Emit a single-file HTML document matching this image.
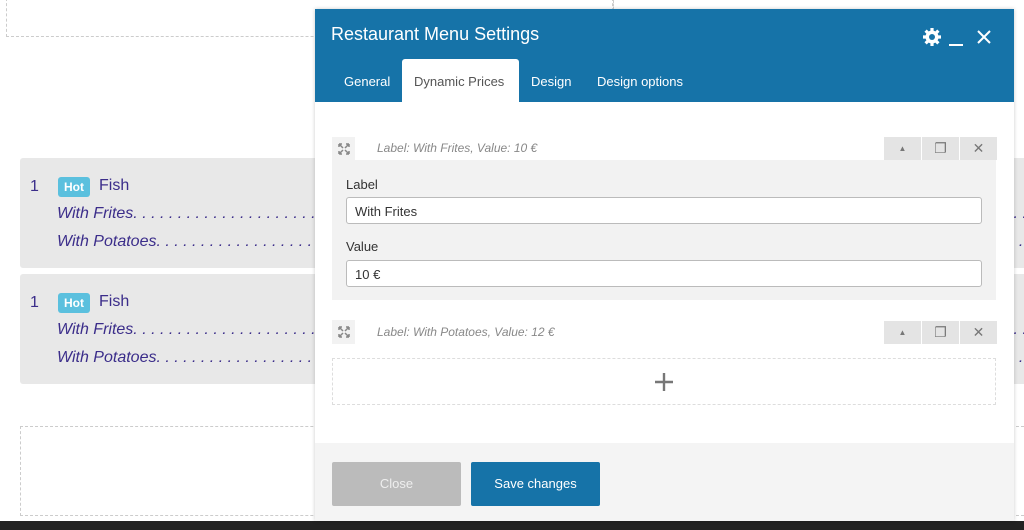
<!DOCTYPE html>
<html><head><style>
*{box-sizing:border-box;margin:0;padding:0}
html,body{width:1024px;height:530px;overflow:hidden}
body{background:#fff;font-family:"Liberation Sans",sans-serif;position:relative}
.abs{position:absolute}
.menu{position:absolute;left:20px;width:1004px;background:#e8e8e8;border-radius:3px 0 0 3px;color:#3b2d8a;overflow:hidden}
.menu .num{position:absolute;left:10px;top:20px;font-size:16px}
.hot{position:absolute;left:38px;top:19px;background:#5bc0de;color:#fff;font-weight:bold;font-size:12px;padding:3px 6px;border-radius:3px}
.fish{position:absolute;left:79px;top:19px;font-size:16px}
.it{position:absolute;left:37px;font-style:italic;font-size:16px;white-space:nowrap}
.modal{position:absolute;left:315px;top:9px;width:699px;height:512px;background:#fff;box-shadow:0 0 4px rgba(0,0,0,.2)}
.hd{height:93px;background:#1673a8;color:#fff;position:relative}
.tab{position:absolute;top:74px;font-size:13px;color:#fff}
.ph{position:absolute;height:23px;font-style:italic;font-size:12px;color:#888}
.btnx{position:absolute;width:37px;height:23px;background:#e4e4e4;color:#777;text-align:center;line-height:23px;font-size:14px}
.inp{position:absolute;left:346px;width:636px;height:27px;border:1px solid #bbb;border-radius:3px;background:#fff;font-size:13px;padding:6px 8px;color:#333}
.lbl{position:absolute;left:346px;font-size:13px;color:#333}
</style></head><body>
<div class="abs" style="left:6px;top:-2px;width:607px;height:39px;border:1px dashed #ccc"></div>
<div class="abs" style="left:613px;top:0;height:10px;border-left:1px dashed #ccc"></div>
<div class="abs" style="left:20px;top:426px;width:1004px;height:90px;border:1px dashed #ccc;border-right:none"></div>
<div class="menu" style="top:158px;height:110px"><span class="num">1</span><span class="hot">Hot</span><span class="fish">Fish</span>
<span class="it" style="top:47px">With Frites. . . . . . . . . . . . . . . . . . . . . . . . . . . . . . . . . . . . . . . . . . . . . . . . . . . . . . . . . . . . . . . . . . . . . . . . . . . . . . . . . . . . . . . . . . . . . . . . . . . . . . . . . . . . . . . . . . . . . . . . . . . .</span>
<span class="it" style="top:75px">With Potatoes. . . . . . . . . . . . . . . . . . . . . . . . . . . . . . . . . . . . . . . . . . . . . . . . . . . . . . . . . . . . . . . . . . . . . . . . . . . . . . . . . . . . . . . . . . . . . . . . . . . . . . . . . . . . . . . . . . . . . . . . . . . .</span></div>
<div class="menu" style="top:274px;height:110px"><span class="num">1</span><span class="hot">Hot</span><span class="fish">Fish</span>
<span class="it" style="top:47px">With Frites. . . . . . . . . . . . . . . . . . . . . . . . . . . . . . . . . . . . . . . . . . . . . . . . . . . . . . . . . . . . . . . . . . . . . . . . . . . . . . . . . . . . . . . . . . . . . . . . . . . . . . . . . . . . . . . . . . . . . . . . . . . .</span>
<span class="it" style="top:75px">With Potatoes. . . . . . . . . . . . . . . . . . . . . . . . . . . . . . . . . . . . . . . . . . . . . . . . . . . . . . . . . . . . . . . . . . . . . . . . . . . . . . . . . . . . . . . . . . . . . . . . . . . . . . . . . . . . . . . . . . . . . . . . . . . .</span></div>
<div class="abs" style="left:0;top:521px;width:1024px;height:9px;background:#222"></div>
<div class="modal">
 <div class="hd">
  <div class="abs" style="left:16px;top:15px;font-size:18px">Restaurant Menu Settings</div>
  <svg class="abs" style="left:607px;top:18px" width="20" height="20" viewBox="0 0 20 20"><circle cx="10" cy="10" r="6.5" fill="#fff"/><g stroke="#fff" stroke-width="3.2"><line x1="10" y1="1" x2="10" y2="19"/><line x1="1" y1="10" x2="19" y2="10"/><line x1="3.6" y1="3.6" x2="16.4" y2="16.4"/><line x1="16.4" y1="3.6" x2="3.6" y2="16.4"/></g><circle cx="10" cy="10" r="3" fill="#1673a8"/></svg>
  <div class="abs" style="left:634px;top:35px;width:14px;height:2px;background:#fff"></div>
  <svg class="abs" style="left:662px;top:21px" width="14" height="14"><path d="M1 1L13 13M13 1L1 13" stroke="#fff" stroke-width="2"/></svg>
  <div class="abs" style="left:87px;top:50px;width:117px;height:43px;background:#fff;border-radius:3px 3px 0 0"></div>
  <span class="tab" style="left:29px;top:65px">General</span>
  <span class="tab" style="left:99px;top:65px;color:#555">Dynamic Prices</span>
  <span class="tab" style="left:216px;top:65px">Design</span>
  <span class="tab" style="left:282px;top:65px">Design options</span>
 </div>
 <div class="abs" style="left:0;top:434px;width:699px;height:78px;background:#f4f4f4"></div>
 <div class="abs" style="left:17px;top:453px;width:129px;height:44px;background:#bbb;border-radius:2px;color:#eee;font-size:13px;text-align:center;line-height:44px">Close</div>
 <div class="abs" style="left:156px;top:453px;width:129px;height:44px;background:#1673a8;border-radius:2px;color:#fff;font-size:13px;text-align:center;line-height:44px">Save changes</div>
</div>
<div class="abs" style="left:332px;top:160px;width:664px;height:140px;background:#f2f2f2"></div>
<div class="abs" style="left:332px;top:137px;width:23px;height:23px;background:#f2f2f2"></div>
<svg class="abs" style="left:338px;top:143px" width="12" height="12"><path d="M1 1l4 4M11 1l-4 4M1 11l4-4M11 11l-4-4M1 1h3M1 1v3M11 1h-3M11 1v3M1 11h3M1 11v-3M11 11h-3M11 11v-3" stroke="#888" stroke-width="1.5"/></svg>
<div class="ph" style="left:377px;top:141px">Label: With Frites, Value: 10 €</div>
<div class="btnx" style="left:884px;top:137px;font-size:8px">▲</div>
<div class="btnx" style="left:922px;top:137px">❐</div>
<div class="btnx" style="left:960px;top:137px">✕</div>
<div class="lbl" style="top:177px">Label</div>
<div class="inp" style="top:197px">With Frites</div>
<div class="lbl" style="top:239px">Value</div>
<div class="inp" style="top:260px">10 €</div>
<div class="abs" style="left:332px;top:320px;width:23px;height:24px;background:#f2f2f2"></div>
<svg class="abs" style="left:338px;top:326px" width="12" height="12"><path d="M1 1l4 4M11 1l-4 4M1 11l4-4M11 11l-4-4M1 1h3M1 1v3M11 1h-3M11 1v3M1 11h3M1 11v-3M11 11h-3M11 11v-3" stroke="#888" stroke-width="1.5"/></svg>
<div class="ph" style="left:377px;top:325px">Label: With Potatoes, Value: 12 €</div>
<div class="btnx" style="left:884px;top:321px;font-size:8px">▲</div>
<div class="btnx" style="left:922px;top:321px">❐</div>
<div class="btnx" style="left:960px;top:321px">✕</div>
<div class="abs" style="left:332px;top:358px;width:664px;height:47px;border:1px dashed #ddd"></div>
<svg class="abs" style="left:654px;top:372px" width="20" height="20"><path d="M10 1v18M1 10h18" stroke="#777" stroke-width="2.4"/></svg>
</body></html>
